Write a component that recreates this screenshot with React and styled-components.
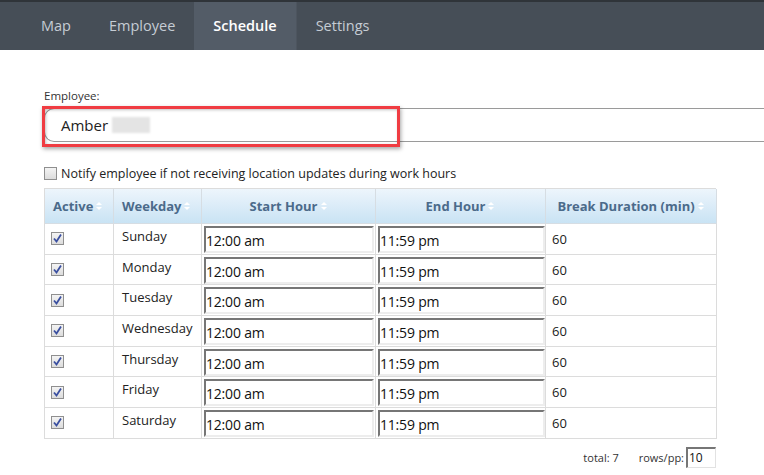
import React from "react";
import styled, { createGlobalStyle } from "styled-components";

const Global = createGlobalStyle`
  html, body { margin: 0; padding: 0; background: #fff; }
  body { font-family: "Open Sans", "DejaVu Sans", sans-serif; color: #222; }
  * { box-sizing: border-box; }
`;

const Nav = styled.div`
  height: 50px;
  background: #464e57;
  border-top: 2px solid #2f3439;
  display: flex;
  padding-left: 22px;
`;

const Tab = styled.div`
  display: flex;
  align-items: center;
  padding: 0 19px 2px;
  font-size: 14.5px;
  color: ${(p) => (p.$active ? "#ffffff" : "#c5ccd4")};
  font-weight: ${(p) => (p.$active ? 600 : 400)};
  background: ${(p) => (p.$active ? "#535c67" : "transparent")};
  border-right: ${(p) => (p.$active ? "1px solid #4d555f" : "none")};
`;

const Main = styled.div`
  padding: 38px 0 0 44px;
`;

const Label = styled.div`
  font-size: 11.5px;
  color: #333;
  margin-bottom: 5px;
`;

const FieldWrap = styled.div`
  position: relative;
  height: 34px;
`;

const NameField = styled.div`
  height: 34px;
  border: 1px solid #9a9a9a;
  border-right: none;
  border-radius: 10px 0 0 10px;
  display: flex;
  align-items: center;
  padding-left: 16px;
  font-size: 15px;
  color: #222;
  gap: 4px;
`;

const Blur = styled.span`
  display: inline-block;
  width: 38px;
  height: 16px;
  background: #e4e4e4;
  filter: blur(1px);
`;

const Highlight = styled.div`
  position: absolute;
  left: -2px;
  top: -2px;
  width: 358px;
  height: 41px;
  border: 3px solid #f03c42;
  box-shadow: 1px 2px 4px rgba(0, 0, 0, 0.35), inset 1px 1px 3px rgba(0, 0, 0, 0.25);
`;

const NotifyRow = styled.label`
  display: flex;
  align-items: center;
  gap: 4px;
  margin-top: 23px;
  font-size: 12.5px;
  color: #222;
`;

const Box = styled.span`
  display: inline-block;
  width: 13px;
  height: 13px;
  border: 1px solid #8f8f8f;
  background: linear-gradient(#f4f4f4, #dcdcdc);
  position: relative;
  flex: none;
`;

const Table = styled.div`
  margin-top: 6px;
  width: 672px;
  display: grid;
  grid-template-columns: 69px 88px 174px 170px 171px;
  border-left: 1px solid #dcdcdc;
  border-top: 1px solid #dcdcdc;
`;

const Th = styled.div`
  height: 35px;
  background: linear-gradient(#edf5fc, #c9e3f4);
  border-right: 1px solid #d6dde3;
  border-bottom: 1px solid #d6dde3;
  display: flex;
  align-items: center;
  justify-content: ${(p) => (p.$center ? "center" : "flex-start")};
  padding-left: ${(p) => (p.$center ? "0" : "8px")};
  font-size: 13px;
  font-weight: 700;
  color: #4b6a8a;
  gap: 2px;
  white-space: nowrap;
`;

const Td = styled.div`
  height: 30.7px;
  border-right: 1px solid #dcdcdc;
  border-bottom: 1px solid #dcdcdc;
  display: flex;
  align-items: ${(p) => (p.$top ? "flex-start" : "center")};
  padding: ${(p) => (p.$top ? "3px 0 0 8px" : p.$input ? "0 0 0 2px" : "0 0 0 6px")};
  font-size: 13px;
  color: #222;
`;

const TimeInput = styled.div`
  width: ${(p) => p.$w}px;
  height: 27px;
  margin-top: 1px;
  border-top: 2px solid #767676;
  border-left: 2px solid #767676;
  border-right: 2px solid #ededed;
  border-bottom: 2px solid #ededed;
  background: #fff;
  display: flex;
  align-items: center;
  padding: 2px 0 0 0;
  font-size: 14px;
  color: #111;
  letter-spacing: -0.2px;
`;

const Footer = styled.div`
  width: 672px;
  display: flex;
  justify-content: flex-end;
  align-items: center;
  gap: 20px;
  margin-top: 8px;
  font-size: 11px;
  color: #333;
`;

const Pp = styled.span`
  display: flex;
  align-items: center;
  gap: 2px;
`;

const PpInput = styled.div`
  width: 30px;
  height: 21px;
  border-top: 2px solid #767676;
  border-left: 2px solid #767676;
  border-right: 1px solid #e2e2e2;
  border-bottom: 1px solid #e2e2e2;
  display: flex;
  align-items: center;
  padding-left: 1px;
  font-size: 12px;
  color: #111;
`;

const Sort = () => (
  <svg width="8" height="12" viewBox="0 0 8 12">
    <path d="M1 5 L4 2 L7 5 Z" fill="#ffffff" />
    <path d="M1 7 L4 10 L7 7 Z" fill="#ffffff" />
  </svg>
);

const Check = ({ checked }) => (
  <Box>
    {checked && (
      <svg width="11" height="11" viewBox="0 0 11 11" style={{ position: "absolute", left: 0, top: 0 }}>
        <path d="M2 5.5 L4.5 8.5 L9 1.5" stroke="#3a4fa0" strokeWidth="1.8" fill="none" />
      </svg>
    )}
  </Box>
);

const days = ["Sunday", "Monday", "Tuesday", "Wednesday", "Thursday", "Friday", "Saturday"];

export default function App() {
  return (
    <>
      <Global />
      <Nav>
        <Tab>Map</Tab>
        <Tab>Employee</Tab>
        <Tab $active>Schedule</Tab>
        <Tab>Settings</Tab>
      </Nav>
      <Main>
        <Label>Employee:</Label>
        <FieldWrap>
          <NameField>
            Amber <Blur />
          </NameField>
          <Highlight />
        </FieldWrap>
        <NotifyRow>
          <Check />
          Notify employee if not receiving location updates during work hours
        </NotifyRow>
        <Table>
          <Th>Active <Sort /></Th>
          <Th>Weekday <Sort /></Th>
          <Th $center>Start Hour <Sort /></Th>
          <Th $center>End Hour <Sort /></Th>
          <Th $center>Break Duration (min) <Sort /></Th>
          {days.map((d) => (
            <React.Fragment key={d}>
              <Td><Check checked /></Td>
              <Td $top>{d}</Td>
              <Td $input><TimeInput $w={170}>12:00 am</TimeInput></Td>
              <Td $input><TimeInput $w={167}>11:59 pm</TimeInput></Td>
              <Td>60</Td>
            </React.Fragment>
          ))}
        </Table>
        <Footer>
          <span>total: 7</span>
          <Pp>
            rows/pp: <PpInput>10</PpInput>
          </Pp>
        </Footer>
      </Main>
    </>
  );
}
